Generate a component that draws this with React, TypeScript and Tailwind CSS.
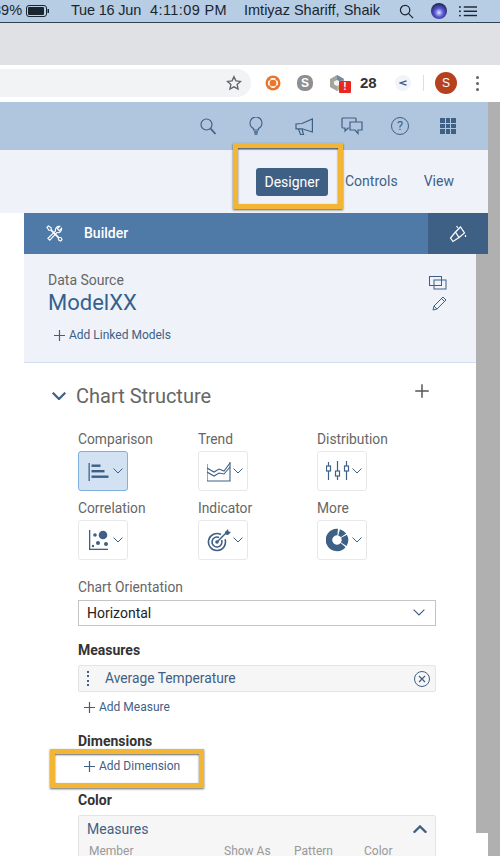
import React from "react";

const ICON = "#3f6085";
const sans = "font-['Roboto',sans-serif]";

function Plus({ size = 13, color = ICON }: { size?: number; color?: string }) {
  return (
    <svg width={size} height={size} viewBox="0 0 13 13" fill="none" stroke={color} strokeWidth="1.2">
      <path d="M6.5 1v11M1 6.5h11" />
    </svg>
  );
}

function Chevron({ w = 10, up = false, color = ICON, sw = 1 }: { w?: number; up?: boolean; color?: string; sw?: number }) {
  return (
    <svg width={w} height={w * 0.6} viewBox="0 0 10 6" fill="none" stroke={color} strokeWidth={sw}>
      <path d={up ? "M.5 5.5 5 1l4.5 4.5" : "M.5.5 5 5 9.5.5"} />
    </svg>
  );
}

function ChartTile({ label, active, icon }: { label: string; active?: boolean; icon: React.ReactNode }) {
  return (
    <div className="w-[120px]">
      <div className="text-[13.8px] leading-[18px] text-[#666]">{label}</div>
      <div
        className={
          "mt-[3px] w-[50px] h-[40px] rounded-[3px] flex items-center pl-[8px] gap-[2px] border " +
          (active ? "bg-[#d3e2f3] border-[#7fb0e0]" : "bg-white border-[#e8e8e8]")
        }
      >
        <div className="w-[24px] h-[24px] shrink-0">{icon}</div>
        <Chevron />
      </div>
    </div>
  );
}

const comparisonIcon = (
  <svg width="24" height="24" viewBox="0 0 24 24" fill={ICON}>
    <rect x="1.500" y="4" width="1.300" height="18" />
    <rect x="4.500" y="5.500" width="9" height="2.400" />
    <rect x="4.500" y="11" width="13" height="2.400" />
    <rect x="4.500" y="16.500" width="17" height="2.400" />
  </svg>
);

const trendIcon = (
  <svg width="24" height="24" viewBox="0 0 24 24" fill="none" stroke={ICON} strokeWidth="1.1">
    <path d="M0 5v17h23V3" />
    <path d="M0 9l7 4 5-3 5 2 6-8" />
    <path d="M0 13l7 4 5-3 5 1 6-7" />
  </svg>
);

const distributionIcon = (
  <svg width="24" height="24" viewBox="0 0 24 24" fill="none" stroke={ICON} strokeWidth="1.2">
    <path d="M2.500 3v4M2.500 12v9M11.500 2v10M11.500 17v4M20.500 2v5M20.500 12v9" />
    <rect x=".500" y="7" width="4" height="5" />
    <rect x="9.500" y="12" width="4" height="5" />
    <rect x="18.500" y="7" width="4" height="5" />
  </svg>
);

const correlationIcon = (
  <svg width="24" height="24" viewBox="0 0 24 24" fill={ICON}>
    <rect x="2" y="2" width="1.300" height="20" />
    <rect x="2" y="20.700" width="19" height="1.300" />
    <circle cx="16" cy="7" r="4.300" />
    <circle cx="8" cy="7" r="1.800" />
    <circle cx="11" cy="15" r="2" />
    <circle cx="19" cy="16" r="2" />
    <circle cx="6" cy="18" r="1.200" />
  </svg>
);

const indicatorIcon = (
  <svg width="24" height="24" viewBox="0 0 24 24" fill="none" stroke={ICON}>
    <path d="M14 6.500A8.500 8.500 0 1 0 18 11.200" strokeWidth="1.600" />
    <path d="M12 9.400A5 5 0 1 0 14.600 12" strokeWidth="1.600" />
    <circle cx="10" cy="14" r="1.800" fill={ICON} stroke="none" />
    <path d="M10 14 20 4" strokeWidth="1.500" />
    <path d="M18 4l3-3 .5 2.500 2.500.5-3 3-2.500-.5z" fill={ICON} stroke="none" />
  </svg>
);

const moreIcon = (
  <svg width="24" height="24" viewBox="0 0 24 24" fill="none" stroke={ICON} strokeWidth="6.500">
    <path d="M11.700 4.030A8 8 0 1 0 17.130 17.140" />
    <path d="M13.070 4.270A8 8 0 0 1 17.550 7.410" />
    <path d="M18.060 8.240A8 8 0 0 1 17.780 16.240" />
  </svg>
);

function MenuBar() {
  return (
    <div className="h-[23px] bg-[#b6cde3] border-b border-[#2f4252] flex items-center text-[14.5px] text-[#1b2530] font-['Liberation_Sans',sans-serif] overflow-hidden shrink-0">
      <span className="ml-[-7px] w-[29px]">89%</span>
      <svg width="24" height="12" viewBox="0 0 24 12" className="ml-[4px]">
        <rect x=".5" y=".5" width="20" height="11" rx="2.500" fill="none" stroke="#1b2530" />
        <rect x="2" y="2" width="16" height="8" rx="1" fill="#1b2530" />
        <rect x="21.500" y="4" width="1.500" height="4" fill="#1b2530" />
      </svg>
      <span className="ml-[21px] whitespace-nowrap w-[71px] tracking-[-0.2px]">Tue 16 Jun</span>
      <span className="ml-[8px] whitespace-nowrap w-[77px] tracking-[0.4px]">4:11:09 PM</span>
      <span className="ml-[17px] whitespace-nowrap w-[138px]">Imtiyaz Shariff, Shaik</span>
      <svg width="15" height="15" viewBox="0 0 16 16" fill="none" stroke="#1b2530" strokeWidth="1.300" className="ml-[17px] shrink-0">
        <circle cx="6.500" cy="6.500" r="5" />
        <path d="m10 10 5 5" />
      </svg>
      <div className="ml-[17px] w-[16px] h-[16px] shrink-0 rounded-full bg-[radial-gradient(circle_at_50%_60%,#d8e8ff_0,#5a55d8_35%,#16203a_80%)]" />
      <svg width="18" height="11" viewBox="0 0 19 11" fill="#1b2530" className="ml-[12px] shrink-0">
        <rect x="5" y="0" width="14" height="1.500" />
        <rect x="5" y="4.500" width="14" height="1.500" />
        <rect x="5" y="9" width="14" height="1.500" />
        <circle cx="1" cy=".8" r="1" />
        <circle cx="1" cy="5.300" r="1" />
        <circle cx="1" cy="9.800" r="1" />
      </svg>
    </div>
  );
}

function BrowserToolbar() {
  return (
    <div className="h-[37px] bg-white flex items-center shrink-0 pb-[1px]">
      <div className="w-[251px] h-[28px] bg-[#f1f3f4] rounded-r-full flex items-center justify-end pr-[9px]">
        <svg width="16" height="16" viewBox="0 0 24 24" fill="none" stroke="#5f6368" strokeWidth="2">
          <path d="m12 2.500 2.900 6.300 6.900.8-5.100 4.700 1.400 6.800-6.100-3.400-6.100 3.400 1.400-6.800L2.200 9.600l6.900-.8z" />
        </svg>
      </div>
      <svg width="16" height="16" viewBox="0 0 16 16" fill="none" className="ml-[14px]">
        <circle cx="8" cy="8" r="7.500" fill="#e8772e" />
        <circle cx="8" cy="8" r="4.200" fill="none" stroke="#fff" strokeWidth="1.700" />
        <path d="m2.800 2.800 2.400 2.400M13.200 2.800l-2.400 2.400M2.800 13.200l2.400-2.400M13.200 13.200l-2.400-2.400" stroke="#e8772e" strokeWidth="1.600" />
      </svg>
      <div className="ml-[16px] w-[16px] h-[16px] rounded-[7px] bg-[#8f8f8f] text-white text-[12px] leading-[16px] font-bold text-center font-['Liberation_Sans',sans-serif]">S</div>
      <div className="ml-[16px] relative w-[16px] h-[16px]">
        <svg width="16" height="16" viewBox="0 0 16 16">
          <path d="M8 0 15 4v8l-7 4-7-4V4z" fill="#a3a59d" />
          <path d="M8 0 15 4 8 8z" fill="#6e89a8" />
          <path d="M8 8h7v4l-7 4z" fill="#c9b48c" />
          <path d="M8 5l3 1.500v3L8 11 5 9.500v-3z" fill="#f2f2f0" />
        </svg>
        <div className="absolute left-[10px] top-[6px] w-[12px] h-[12px] rounded-[1px] bg-[#e8281e] text-white text-[10px] leading-[12px] font-bold text-center font-['Liberation_Sans',sans-serif]">!</div>
      </div>
      <span className="ml-[15px] w-[17px] text-[15px] font-bold text-[#333] font-['Liberation_Sans',sans-serif]">28</span>
      <div className="ml-[18px] w-[16px] h-[16px] rounded-full bg-[#f1f4f9] flex items-center justify-center">
        <svg width="8" height="6" viewBox="0 0 8 6" fill="none" stroke="#2f4f8f" strokeWidth="1.300">
          <path d="M7.500.8 1 3l6.500 2.200" />
        </svg>
      </div>
      <div className="ml-[12px] w-px h-[16px] bg-[#dcdfe2]" />
      <div className="ml-[11px] w-[22px] h-[22px] rounded-full bg-[#b5411e] text-white text-[12px] leading-[22px] text-center font-['Liberation_Sans',sans-serif]">S</div>
      <div className="ml-[19px] flex flex-col gap-[3px]">
        <div className="w-[3px] h-[3px] rounded-full bg-[#5f6368]" />
        <div className="w-[3px] h-[3px] rounded-full bg-[#5f6368]" />
        <div className="w-[3px] h-[3px] rounded-full bg-[#5f6368]" />
      </div>
    </div>
  );
}

function ShellBar() {
  return (
    <div className="h-[48px] bg-[#afc6de] flex items-center pl-[200px] shrink-0">
      <svg width="16" height="17" viewBox="0 0 16 17" fill="none" stroke={ICON} strokeWidth="1.200">
        <circle cx="6.500" cy="6.500" r="5.500" />
        <path d="m10.500 10.500 5 5.500" strokeWidth="1.800" />
      </svg>
      <svg width="14" height="18" viewBox="0 0 14 18" fill="none" stroke={ICON} strokeWidth="1.100" className="ml-[33px]">
        <path d="M4.500 13v-1.500C2.500 10.500 1 8.500 1 6a6 6 0 0 1 12 0c0 2.500-1.500 4.500-3.500 5.500V13z" />
        <path d="M5 15h4M5.500 17h3" strokeWidth="1.400" />
      </svg>
      <svg width="18" height="17" viewBox="0 0 18 17" fill="none" stroke={ICON} strokeWidth="1.200" className="ml-[32px]">
        <path d="M17.400 1v13L7 10.800H1V6l6-.5z" />
        <path d="M3.500 11l2 5.500h3L7 11" />
      </svg>
      <svg width="22" height="18" viewBox="0 0 22 18" fill="none" stroke={ICON} strokeWidth="1.200" className="ml-[28px]">
        <path d="M15 5V2a1 1 0 0 0-1-1H2a1 1 0 0 0-1 1v8a1 1 0 0 0 1 1h2v3l3-3h1" />
        <path d="M9 5h12v8h-4v3.500L14 13H9z" />
      </svg>
      <div className="ml-[28px] w-[18px] h-[18px] rounded-full border border-[#3f6085] text-[#3f6085] text-[13px] leading-[16px] text-center">?</div>
      <div className="ml-[31px] grid grid-cols-3 gap-[1px] w-[16px]">
        {[0, 1, 2, 3, 4, 5, 6, 7, 8].map((n) => (
          <div key={n} className="h-[4.670px] bg-[#3f6085]" />
        ))}
      </div>
    </div>
  );
}

function SubBar() {
  return (
    <div className="h-[63px] bg-[#eff3f9] flex items-center pl-[256px] shrink-0 relative">
      <div className="w-[72px] h-[28px] rounded-[3px] bg-[#3f6085] text-white text-[14px] leading-[28px] text-center">Designer</div>
      <div className="ml-[17px] text-[14px] text-[#3f6085]">Controls</div>
      <div className="ml-[26px] text-[14px] text-[#3f6085]">View</div>
      <div className="absolute left-[233px] top-[-7px] w-[110px] h-[66px] border-[5px] border-[#f3b634] shadow-[0_1px_2px_rgba(0,0,0,0.6),inset_0_1px_2px_rgba(0,0,0,0.6)]" />
    </div>
  );
}

function BuilderHeader() {
  return (
    <div className="ml-[24px] h-[41px] bg-[#4f7aa8] flex items-center shrink-0">
      <svg width="17" height="17" viewBox="0 0 18 18" fill="none" stroke="#fff" strokeWidth="1.200" className="ml-[22px]">
        <path d="M1 2.500 2.500 1l3 2v2l8 8 2.500.5 1 2-1.500 1.500-2-1-.5-2.500-8-8H3z" />
        <path d="M16.500 3.500 14 6l-2-2 2.500-2.500a4 4 0 0 0-4.500 5L2 14l2 2 7.500-8a4 4 0 0 0 5-4.500z" />
      </svg>
      <span className="ml-[21px] text-white text-[14px] font-medium">Builder</span>
      <div className="ml-auto w-[60px] h-full bg-[#3f6085] flex items-center justify-center">
        <svg width="18" height="18" viewBox="0 0 18 18" fill="none" stroke="#fff" strokeWidth="1.200">
          <path d="m6.500 7 5-5 4 6-5.500 4.500z" />
          <path d="M6.500 7 1.500 13 4 16.500l6-4" />
          <path d="M9 3 7.500 1M16.500 10v2" />
        </svg>
      </div>
    </div>
  );
}

function DataSource() {
  return (
    <div className="h-[109px] bg-[#eff3f9] border-b border-[#d3dfee] pl-[24px] pr-[29px] pt-[17px] flex justify-between shrink-0">
      <div>
        <div className="text-[14px] leading-[18px] text-[#666]">Data Source</div>
        <div className="text-[22px] leading-[28px] text-[#35618f]">ModelXX</div>
        <div className="mt-[10px] ml-[5px]">
          <AddLink label="Add Linked Models" />
        </div>
      </div>
      <div className="flex flex-col items-end gap-[6px] pt-[5px]">
        <svg width="18" height="14" viewBox="0 0 18 14" fill="none" stroke={ICON}>
          <rect x=".5" y=".5" width="12" height="9" />
          <rect x="5" y="4" width="12" height="9" />
        </svg>
        <svg width="15" height="15" viewBox="0 0 15 15" fill="none" stroke={ICON}>
          <path d="M1 14l1-4L11 1l3 3-9 9zM2 10l3 3M9.500 2.500l3 3" />
        </svg>
      </div>
    </div>
  );
}

function AddLink({ label }: { label: string }) {
  return (
    <div className="flex items-center gap-[3px] text-[12px] leading-[16px] text-[#3f6085]">
      <Plus />
      <span>{label}</span>
    </div>
  );
}

function ChartStructure() {
  return (
    <div className="bg-white flex-1 min-h-0 relative overflow-visible">
      <div className="h-[66px] pl-[28px] pr-[46px] flex items-center">
        <Chevron w={14} sw={1.6} />
        <span className="ml-[10px] text-[20px] text-[#666]">Chart Structure</span>
        <div className="ml-auto mb-[10px]">
          <Plus size={16} color="#555" />
        </div>
      </div>
      <div className="pl-[54px] pt-[1px]">
        <div className="grid grid-cols-[120px_119px_120px] gap-y-[8px]">
          <ChartTile label="Comparison" active icon={comparisonIcon} />
          <ChartTile label="Trend" icon={trendIcon} />
          <ChartTile label="Distribution" icon={distributionIcon} />
          <ChartTile label="Correlation" icon={correlationIcon} />
          <ChartTile label="Indicator" icon={indicatorIcon} />
          <ChartTile label="More" icon={moreIcon} />
        </div>
        <div className="mt-[18px] text-[13.8px] leading-[18px] text-[#666]">Chart Orientation</div>
        <div className="mt-[4px] w-[358px] h-[26px] border border-[#c4c4c4] flex items-center justify-between pl-[8px] pr-[10px] text-[14px] text-[#222]">
          <span>Horizontal</span>
          <Chevron w={12} />
        </div>
        <div className="mt-[15px] text-[14px] leading-[18px] font-bold text-[#333]">Measures</div>
        <div className="mt-[6px] w-[358px] h-[27px] bg-[#f6f6f6] border border-[#e4e4e4] rounded-[2px] flex items-center pl-[8px] pr-[5px] text-[13.8px] text-[#3f6085]">
          <div className="flex flex-col gap-[2.500px]">
            <div className="w-[2px] h-[2px] bg-[#3f6085]" />
            <div className="w-[2px] h-[2px] bg-[#3f6085]" />
            <div className="w-[2px] h-[2px] bg-[#3f6085]" />
            <div className="w-[2px] h-[2px] bg-[#3f6085]" />
          </div>
          <span className="ml-[16px]">Average Temperature</span>
          <svg width="16" height="16" viewBox="0 0 16 16" fill="none" stroke={ICON} className="ml-auto">
            <circle cx="8" cy="8" r="7.500" />
            <path d="m5 5 6 6M11 5l-6 6" strokeWidth="1.200" />
          </svg>
        </div>
        <div className="mt-[7px] ml-[5px]">
          <AddLink label="Add Measure" />
        </div>
        <div className="mt-[17px] text-[14px] leading-[18px] font-bold text-[#333]">Dimensions</div>
        <div className="mt-[8px] ml-[5px]">
          <AddLink label="Add Dimension" />
        </div>
        <div className="mt-[17px] text-[14px] leading-[18px] font-bold text-[#333]">Color</div>
        <div className="mt-[6px] w-[358px] h-[60px] bg-[#f6f6f6] border border-[#e4e4e4] rounded-t-[2px] px-[8px]">
          <div className="flex items-center justify-between h-[26px] text-[14px] text-[#3f6085]">
            <span>Measures</span>
            <Chevron w={14} up sw={1.6} />
          </div>
          <div className="mt-[1px] grid grid-cols-[135px_70px_70px_60px] text-[12px] leading-[16px] text-[#999] pl-[2px]">
            <span>Member</span>
            <span>Show As</span>
            <span>Pattern</span>
            <span>Color</span>
          </div>
        </div>
      </div>
      <div className="absolute left-[26px] top-[386px] w-[154px] h-[39px] border-[5px] border-[#f3b634] shadow-[0_1px_2px_rgba(0,0,0,0.6),inset_0_1px_2px_rgba(0,0,0,0.6)]" />
    </div>
  );
}

export default function App() {
  return (
    <div className={"w-[500px] h-[856px] overflow-hidden bg-white flex flex-col " + sans}>
      <MenuBar />
      <div className="h-[42px] bg-[#dfe1e5] shrink-0" />
      <BrowserToolbar />
      <div className="flex flex-1 min-h-0">
        <div className="w-[488px] flex flex-col">
          <ShellBar />
          <SubBar />
          <BuilderHeader />
          <div className="flex flex-1 min-h-0 pl-[24px]">
            <div className="w-[452px] flex flex-col">
              <DataSource />
              <ChartStructure />
            </div>
            <div className="w-[12px] h-[579px] bg-[#b0b0b0]" />
          </div>
        </div>
        <div className="w-[12px] bg-[#b0b0b0]" />
      </div>
    </div>
  );
}
